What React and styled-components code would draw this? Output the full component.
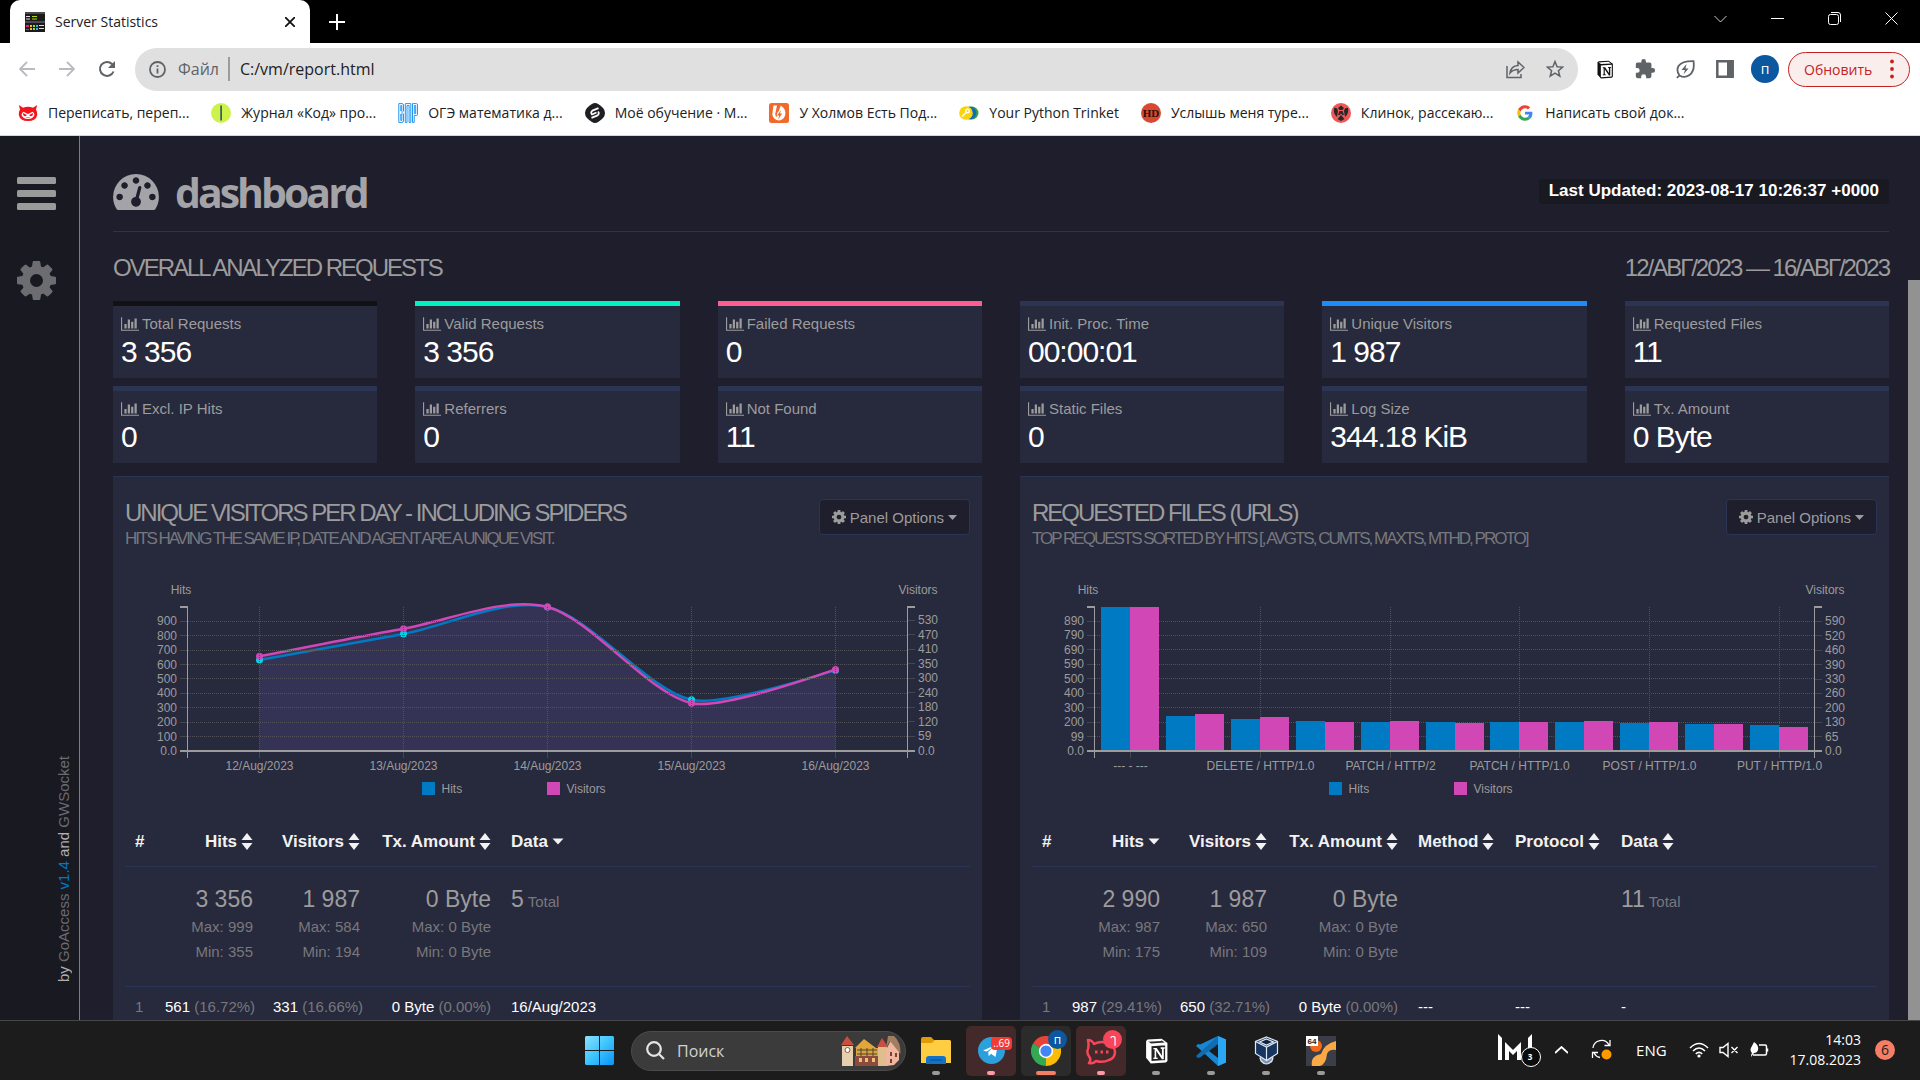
import React, { useLayoutEffect, useRef, useState } from "react";
import styled, { createGlobalStyle } from "styled-components";

const UI = `"Open Sans", "Noto Sans", sans-serif`;
const ARIAL = `"Liberation Sans", Arial, sans-serif`;
const C = {
  bg: "#1f1e2d",
  side: "#191922",
  panel: "#27293c",
  line: "#2b3553",
  text: "#9c9c9c",
  dim: "#77787c",
  hits: "#007bc3",
  visitors: "#d147b5",
};

const Global = createGlobalStyle`
  * { box-sizing: border-box; }
  body { margin: 0; background: ${C.bg}; font-family: ${ARIAL}; }
  button, input { font: inherit; color: inherit; }
  button { background: none; border: 0; padding: 0; margin: 0; }
  a { color: inherit; text-decoration: none; }
  h1, h2, h3, p { margin: 0; font-weight: 400; }
  svg { display: block; flex: none; }
`;

const Screen = styled.div`
  display: flex;
  flex-direction: column;
  height: 100vh;
  overflow: hidden;
`;

/* ---------- browser ---------- */

const TabStrip = styled.div`
  display: flex;
  align-items: center;
  height: 43px;
  flex: none;
  padding: 0 0 6px 10px;
  background: #000;
  font-family: ${UI};
`;
const Tab = styled.div`
  display: flex;
  align-items: center;
  gap: 10px;
  width: 300px;
  height: 43px;
  align-self: flex-start;
  flex: none;
  padding: 0 12px 0 15px;
  border-radius: 10px 10px 0 0;
  background: #fff;
  color: #202124;
  font-size: 14px;
`;
const TabTitle = styled.span`
  flex: 1;
`;
const IconButton = styled.button`
  display: flex;
  align-items: center;
  justify-content: center;
  width: ${(p) => p.$w || 40}px;
  height: ${(p) => p.$h || 36}px;
  flex: none;
  color: ${(p) => p.$color || "#5f6368"};
`;
const Spacer = styled.div`
  flex: 1;
`;
const Toolbar = styled.div`
  display: flex;
  align-items: center;
  height: 52px;
  flex: none;
  padding: 0 10px 0 7px;
  background: #fff;
  font-family: ${UI};
`;
const Omnibox = styled.div`
  display: flex;
  align-items: center;
  flex: 1;
  height: 43px;
  margin: 0 7px 0 8px;
  padding: 0 3px 0 14px;
  border-radius: 22px;
  background: #e0e0e0;
  color: #5f6368;
  font-size: 16px;
`;
const Scheme = styled.label`
  margin-left: 12px;
  padding-right: 9px;
  border-right: 2px solid #9a9da0;
  line-height: 24px;
`;
const Address = styled.input`
  flex: 1;
  min-width: 0;
  margin-left: 10px;
  padding: 0;
  border: 0;
  background: none;
  color: #202124;
  outline: none;
`;
const Avatar = styled.button`
  width: 28px;
  height: 28px;
  margin: 0 9px 0 6px;
  border-radius: 50%;
  background: #0b57a0;
  color: #fff;
  font-size: 14px;
  line-height: 26px;
`;
const Update = styled.button`
  display: flex;
  align-items: center;
  justify-content: space-between;
  width: 122px;
  height: 35px;
  padding: 0 15px;
  border: 1px solid #c5221f;
  border-radius: 18px;
  background: #faeeed;
  color: #c5221f;
  font-size: 14px;
`;
const Bookmarks = styled.nav`
  display: flex;
  align-items: center;
  gap: 22px;
  height: 41px;
  flex: none;
  padding: 0 18px 5px;
  border-bottom: 1px solid #d5d7da;
  background: #fff;
  color: #202124;
  font-family: ${UI};
  font-size: 14px;
`;
const Bookmark = styled.a`
  display: flex;
  align-items: center;
  gap: 10px;
  white-space: nowrap;
`;

/* ---------- report page ---------- */

const Page = styled.div`
  display: flex;
  flex: 1;
  min-height: 0;
  overflow: hidden;
  background: ${C.bg};
  color: ${C.text};
`;
const Side = styled.aside`
  display: flex;
  flex-direction: column;
  align-items: flex-start;
  gap: 50px;
  width: 80px;
  flex: none;
  padding: 41px 0 38px 17px;
  border-right: 1px solid ${C.visitors};
  background: ${C.side};
`;
const Credit = styled.div`
  margin: auto 0 0 38px;
  writing-mode: vertical-rl;
  transform: rotate(180deg);
  font-size: 15px;
  line-height: 18px;
  color: #b0b0b0;
`;
const CreditLink = styled.a`
  color: ${(p) => (p.$accent ? C.hits : "#6b6b70")};
`;
const Main = styled.main`
  flex: 1;
  min-width: 0;
  padding: 0 19px 0 33px;
`;
const Scrollbar = styled.div`
  width: 12px;
  flex: none;
  padding-top: 144px;
`;
const Thumb = styled.div`
  height: 100%;
  background: #929292;
`;
const Header = styled.header`
  display: flex;
  align-items: center;
  justify-content: space-between;
  height: 96px;
  padding-top: 16px;
  border-bottom: 1px solid ${C.line};
`;
const Brand = styled.h1`
  display: flex;
  align-items: center;
  gap: 16px;
  color: #a3a3a8;
  font-family: ${UI};
  font-size: 41px;
  font-weight: 700;
  letter-spacing: -3px;
  line-height: 44px;
`;
const Updated = styled.div`
  height: 25px;
  padding: 0 10px;
  border-radius: 4px;
  background: ${C.side};
  color: #fff;
  font-size: 17px;
  font-weight: 700;
  line-height: 23px;
`;
const SectionHead = styled.div`
  display: flex;
  justify-content: space-between;
  padding: 24px 0 21px;
`;
const Heading = styled.h2`
  font-size: 24px;
  line-height: 24px;
  letter-spacing: -2px;
  text-transform: uppercase;
`;
const Cards = styled.div`
  display: grid;
  grid-template-columns: repeat(6, 1fr);
  gap: 8px 38px;
`;
const Card = styled.div`
  height: 77px;
  padding: 8px;
  border-top: 5px solid ${(p) => p.$top || C.line};
  background: ${C.panel};
`;
const CardLabel = styled.div`
  display: flex;
  align-items: center;
  gap: 3px;
  font-size: 15px;
  line-height: 20px;
`;
const CardValue = styled.div`
  color: #fff;
  font-size: 30px;
  line-height: 36px;
  letter-spacing: -1px;
`;
const Panels = styled.div`
  display: grid;
  grid-template-columns: 1fr 1fr;
  gap: 38px;
  margin-top: 13px;
`;
const Panel = styled.section`
  min-width: 0;
  padding: 22px 12px 0;
  border-top: 1px solid ${C.line};
  background: ${C.panel};
`;
const PanelHead = styled.div`
  display: flex;
  justify-content: space-between;
  align-items: flex-start;
  height: 61px;
`;
const PanelTitle = styled.div`
  padding-top: 2px;
`;
const Subtitle = styled.p`
  margin-top: 4px;
  color: ${C.dim};
  font-size: 17px;
  line-height: 20px;
  letter-spacing: -2px;
  text-transform: uppercase;
`;
const Options = styled.button`
  display: flex;
  align-items: center;
  gap: 4px;
  height: 36px;
  padding: 0 12px;
  border: 1px solid ${C.line};
  border-radius: 4px;
  background: ${C.bg};
  font-size: 15px;
`;
const ChartBox = styled.div`
  height: 250px;
  margin-bottom: 8px;
  svg { width: 100%; }
  text { fill: ${C.text}; font: 12px ${ARIAL}; }
`;
const Table = styled.table`
  width: 100%;
  table-layout: fixed;
  border-collapse: collapse;
  font-size: 15px;
  white-space: nowrap;
  tr { border-bottom: 1px solid ${C.line}; }
`;
const Th = styled.th`
  height: 48px;
  padding: 0 10px;
  color: #f2f2f2;
  font-size: 17px;
  text-align: ${(p) => (p.$num ? "right" : "left")};
  button { display: inline-flex; align-items: center; gap: 4px; }
`;
const Td = styled.td`
  height: 40px;
  padding: 0 10px;
  color: ${(p) => (p.$dim ? C.dim : "#fff")};
  text-align: ${(p) => (p.$num ? "right" : "left")};
  span { color: ${C.dim}; }
`;
const SumTd = styled.td`
  height: 120px;
  padding: 18px 10px 0;
  vertical-align: top;
  color: ${C.dim};
  line-height: 25px;
  text-align: ${(p) => (p.$num ? "right" : "left")};
  strong { color: ${C.text}; font-size: 23px; font-weight: 400; line-height: 28px; }
`;

/* ---------- taskbar ---------- */

const Taskbar = styled.footer`
  display: grid;
  grid-template-columns: 1fr auto 1fr;
  align-items: center;
  height: 60px;
  flex: none;
  border-top: 1px solid #474747;
  background: #1c1c1c;
  color: #fff;
  font-family: ${UI};
`;
const Apps = styled.div`
  grid-column: 2;
  display: flex;
  align-items: center;
  gap: 5px;
`;
const Tile = styled.button`
  position: relative;
  display: flex;
  align-items: center;
  justify-content: center;
  width: 50px;
  height: 50px;
  border-radius: 5px;
  background: ${(p) => p.$bg || "none"};
  &::after {
    content: "";
    position: absolute;
    bottom: 1px;
    left: calc(50% - ${(p) => (p.$wide ? 10 : 4)}px);
    width: ${(p) => (p.$wide ? 20 : 8)}px;
    height: ${(p) => (p.$mark ? 4 : 0)}px;
    border-radius: 2px;
    background: ${(p) => p.$mark};
  }
`;
const Bubble = styled.span`
  position: absolute;
  top: ${(p) => p.$top}px;
  right: ${(p) => p.$right}px;
  min-width: ${(p) => p.$h}px;
  padding: 0 2px;
  border-radius: ${(p) => p.$r}px;
  background: ${(p) => p.$bg};
  color: #fff;
  font-size: ${(p) => p.$size}px;
  line-height: ${(p) => p.$h}px;
  text-align: center;
`;
const Search = styled.label`
  display: flex;
  align-items: center;
  width: 275px;
  height: 40px;
  margin: 0 0 0 2px;
  padding: 0 4px 0 14px;
  border: 1px solid #4b4b4b;
  border-radius: 20px;
  background: #3b3b3b;
  input {
    flex: 1;
    min-width: 0;
    margin-left: 12px;
    padding: 0;
    border: 0;
    outline: none;
    background: none;
    font-size: 16px;
  }
  input::placeholder { color: #d2d2d2; opacity: 1; }
`;
const Tray = styled.div`
  display: flex;
  align-items: center;
  justify-content: flex-end;
  padding: 0 25px 2px 0;
`;
const Lang = styled.span`
  margin: 0 22px 0 23px;
  font-size: 15px;
`;
const Clock = styled.time`
  margin: 0 14px 0 21px;
  font-size: 14px;
  line-height: 20px;
  text-align: right;
`;
const Notices = styled.span`
  width: 20px;
  border-radius: 50%;
  background: #f47f66;
  color: #1c1c1c;
  font-size: 14px;
  line-height: 20px;
  text-align: center;
`;

/* ---------- icons ---------- */

const Svg = ({ w = 20, h = w, box = "0 0 20 20", children, ...rest }) => (
  <svg width={w} height={h} viewBox={box} fill="none" stroke="currentColor" aria-hidden="true" {...rest}>
    {children}
  </svg>
);
const Solid = (p) => <Svg stroke="none" fill="currentColor" {...p} />;

const COG =
  "M1152 896q0-106-75-181t-181-75-181 75-75 181 75 181 181 75 181-75 75-181zm512-109v222q0 12-8 23t-20 13l-185 28q-19 54-39 91 35 50 107 138 10 12 10 25t-9 23q-27 37-99 108t-94 71q-12 0-26-9l-138-108q-44 23-91 38-16 136-29 186-7 28-36 28h-222q-14 0-24.5-8.5t-11.5-21.5l-28-184q-49-16-90-37l-141 107q-10 9-25 9-14 0-25-11-126-114-165-168-7-10-7-23 0-12 8-23 15-21 51-66.5t54-70.5q-27-50-41-99l-183-27q-13-2-21-12.5t-8-23.5v-222q0-12 8-23t19-13l186-28q14-46 39-92-40-57-107-138-10-12-10-24 0-10 9-23 26-36 98.5-107.5t94.5-71.5q13 0 26 10l138 107q44-23 91-38 16-136 29-186 7-28 36-28h222q14 0 24.5 8.5t11.5 21.5l28 184q49 16 90 37l142-107q9-9 24-9 13 0 25 10 129 119 165 170 7 8 7 22 0 12-8 23-15 21-51 66.5t-54 70.5q26 50 41 98l183 28q13 2 21 12.5t8 23.5z";
const DOT = "q0-53-37.5-90.5t-90.5-37.5-90.5 37.5-37.5 90.5 37.5 90.5 90.5 37.5 90.5-37.5 37.5-90.5z";
const GAUGE = `M384 1152${DOT}m192-448${DOT}m428 481l101-382q6-26-7.5-48.5t-38.5-29.5-48 6.5-30 39.5l-101 382q-60 5-107 43.5t-63 98.5q-20 77 20 146t117 89 146-20 89-117q16-60-6-117t-72-91zm660-33${DOT}m-640-640${DOT}m448 192${DOT}m320 448q0 261-141 483-19 29-54 29h-1402q-35 0-54-29-141-221-141-483 0-182 71-348t191-286 286-191 348-71 348 71 286 191 191 286 71 348z`;

const Cog = ({ size }) => (
  <Solid w={size} box="128 128 1536 1536"><path d={COG} /></Solid>
);
const BarsMenu = () => (
  <Solid w={39} h={34} box="0 0 39 34">
    <rect width="39" height="7" rx="1.5" /><rect y="13" width="39" height="7" rx="1.5" /><rect y="26" width="39" height="7" rx="1.5" />
  </Solid>
);
const MiniChart = () => (
  <Solid w={18} h={14} box="0 128 2048 1536">
    <path d="M640 896v512h-256v-512h256zm384-512v1024h-256v-1024h256zm1024 1152v128h-2048v-1536h128v1408h1920zm-640-896v768h-256v-768h256zm384-384v1152h-256v-1152h256z" />
  </Solid>
);
const Sort = ({ only }) => (
  <Solid w={12} h={18} box="0 0 12 18">
    {!only && <path d="M6 0 11.5 7H.5z" />}
    {only ? <path d="M.5 5.500h11L6 11.500z" /> : <path d="M.5 10h11L6 17z" />}
  </Solid>
);
const Notion = ({ w, light }) => (
  <Svg w={w} h={w + 1} box="0 0 24 25" stroke="none">
    <path d="M3.500 1.500 17 .8l5.500 4V22l-1.500 1.600-14.500.9L2 19V3z" fill={light ? "#fff" : "#111"} />
    <path d="m3.500 3 13.200-.9L20 4.400 6.800 5.300z" fill={light ? "#2a2a2a" : "#fff"} />
    <path d="M6.500 7.200 21 6.300v15.600l-14.500.9z" fill={light ? "#222" : "#fff"} />
    <path d="M9 9.500h3.200l5 7.600V10.600l-1.200-.3V9h4v1.200l-1 .4v9.800h-1.800l-5.500-8.100v6.400l1.400.4v1.200H9v-1.200l1.200-.4v-7.900L9 10.800z" fill={light ? "#fff" : "#111"} />
    {light && <path d="M6.500 7.200 21 6.300v15.600l-14.500.9zM3.500 3l13.200-.9" stroke="#fff" strokeWidth="1.400" fill="none" />}
  </Svg>
);

const Favicon = () => (
  <Svg w={20} stroke="none">
    <path d="M0 0h20v20H0z" fill="#1b1b1b" /><path d="M0 0h20v2H0zM0 9h20v2H0z" fill="#4b4b4b" />
    <path d="M1 4h4v1H1zM1 6.500h4v1H1z" fill="#ddd" /><path d="M7 4h5v1H7zM7 6.500h5v1H7z" fill="#b5dc1e" />
    <path d="M1 13h3v2H1zM1 17h3v1H1z" fill="#e6257d" /><path d="M5 13h2v2H5zM5 16h2v2H5z" fill="#f0c52e" />
    <path d="M8 13h2v2H8zM8 16h2v2H8z" fill="#a8d52d" /><path d="M11 13h2v2h-2zM11 16h2v2h-2z" fill="#39b0e8" /><path d="M14 13h5v1h-5zM14 16h5v1h-5z" fill="#ddd" />
  </Svg>
);

const bookmarkIcons = {
  devil: (
    <Svg stroke="none">
      <path d="M.8 2 2 6.500Q.5 9 .8 12 2 18 10 18t9.200-6q.3-3-1.200-5.500L19.200 2 15 4.800q-5-2-10 0z" fill="#f5131c" />
      <path d="M3.500 12q.2-2.500 2-3.300L10 11l4.500-2.300q1.800.8 2 3.300Q15 16 10 16t-6.500-4z" fill="#fff" />
      <path d="m5 10 3.800 1.900q-.8 1.800-2.500 1.200Q4.800 12.500 5 10zM15 10l-3.800 1.900q.8 1.800 2.500 1.200Q15.200 12.500 15 10zM7.500 14.500q2.500 1 5 0" fill="#f5131c" />
    </Svg>
  ),
  code: (
    <Svg stroke="none"><circle cx="10" cy="10" r="10" fill="#cff24a" /><path d="M9.300 2.500h1.600v15H9.300z" fill="#27506d" /></Svg>
  ),
  vpr: (
    <Svg stroke="#2196f3" strokeWidth="1"><path d="M.8.6H4q1.500 0 1.500 1.500V8L4 9.500 5.500 11v6.900Q5.500 19.400 4 19.400H.8zM2.800 2.500v5.500h1V2.500zM2.800 11v6.500h1V11zM7.300 19.400V.6h5.500v18.800h-1.700V2.500H9v16.900zM14.500 19.400V.6h4q1 0 1 1.500v9q0 1.500-1 1.500h-2.300v6.800zM16.300 2.500v8.200h1.400V2.500z" /></Svg>
  ),
  hex: (
    <Svg stroke="none"><path d="M10 0q3 0 8 5 2 2 2 5t-2 5q-5 5-8 5t-8-5q-2-2-2-5t2-5q5-5 8-5z" fill="#1d1f22" /><path d="M13.500 5.200 8 7.300Q5 9 7 11.500l4.500-2M6.500 14.800l5.500-2.100q3-1.700 1-4.200" stroke="#fff" strokeWidth="1.800" /></Svg>
  ),
  flame: (
    <Svg stroke="none"><rect width="20" height="20" rx="2.500" fill="#f26a2b" /><path d="M4.500 2.500H8L6.300 10.500q-.3 3 2 3.500-1.500-3 1.500-6l2-5.500q5.500 4 4.500 9-1 5-6 6-6-.5-7-6z" fill="#fff" /><path d="m12 7-4 5.500h2.200l-1 4 4-6h-2.200z" fill="#f26a2b" /></Svg>
  ),
  trinket: (
    <Svg stroke="none"><circle cx="13" cy="10" r="6.500" fill="#43a047" /><circle cx="11" cy="10" r="6.500" fill="#0b6fb5" /><circle cx="7" cy="10" r="6.800" fill="#fdd20a" /><circle cx="8.500" cy="8" r="1.800" stroke="#fff" strokeWidth="1.400" /><path d="m7 9.500-4 4" stroke="#fff" strokeWidth="1.600" /></Svg>
  ),
  hd: (
    <Svg stroke="none"><circle cx="10" cy="10" r="10" fill="#d8492f" /><text x="10" y="14" textAnchor="middle" fontFamily="Liberation Serif, serif" fontWeight="700" fontSize="11" fill="#2c0f0b">HD</text></Svg>
  ),
  anime: (
    <Svg stroke="none"><circle cx="10" cy="10" r="10" fill="#ef5658" /><path d="M3 5q3-1 4 3l-1 6Q2 11 3 5zM17 5q-3-1-4 3l1 6q4-3 3-9zM10 2.500 13 5l-1.500 2h-3L7 5zM8.500 8h3L13 12h-2l-1-2-1 2H7zM6.500 16 10 12l3.500 4-3.500 2z" fill="#2a2626" /></Svg>
  ),
  google: (
    <Svg stroke="none" box="-7 -7 62 62"><path fill="#EA4335" d="M24 9.500c3.540 0 6.710 1.220 9.210 3.600l6.850-6.850C35.900 2.380 30.470 0 24 0 14.620 0 6.510 5.380 2.560 13.220l7.980 6.190C12.430 13.720 17.740 9.500 24 9.500z" /><path fill="#4285F4" d="M46.980 24.550c0-1.570-.15-3.090-.38-4.550H24v9.020h12.940c-.58 2.960-2.260 5.480-4.780 7.180l7.730 6c4.510-4.180 7.090-10.360 7.090-17.650z" /><path fill="#FBBC05" d="M10.530 28.590A14.500 14.500 0 0 1 9.770 24c0-1.600.27-3.140.76-4.590l-7.980-6.190A23.900 23.900 0 0 0 0 24c0 3.870.92 7.530 2.560 10.780l7.970-6.190z" /><path fill="#34A853" d="M24 48c6.480 0 11.930-2.130 15.890-5.810l-7.730-6c-2.150 1.450-4.920 2.300-8.160 2.300-6.260 0-11.570-4.220-13.470-9.910l-7.980 6.190C6.510 42.620 14.620 48 24 48z" /></Svg>
  ),
};
const bookmarks = [
  ["devil", "Переписать, переп..."],
  ["code", "Журнал «Код» про..."],
  ["vpr", "ОГЭ математика д..."],
  ["hex", "Моё обучение · М..."],
  ["flame", "У Холмов Есть Под..."],
  ["trinket", "Your Python Trinket"],
  ["hd", "Услышь меня туре..."],
  ["anime", "Клинок, рассекаю..."],
  ["google", "Написать свой док..."],
];

/* ---------- charts ---------- */

const TOP = 47;
const BASE = 191;
const SIDE = 63;

function useWidth() {
  const ref = useRef(null);
  const [width, setWidth] = useState(845);
  useLayoutEffect(() => {
    const measure = () => setWidth(Math.round(ref.current.clientWidth));
    measure();
    const ro = new ResizeObserver(measure);
    ro.observe(ref.current);
    return () => ro.disconnect();
  }, []);
  return [ref, width];
}

/* cardinal spline through the points, tension 0.7 */
function spline(pts) {
  const n = pts.length;
  const tan = pts.map((_, i) =>
    i > 0 && i < n - 1 ? [0.15 * (pts[i + 1][0] - pts[i - 1][0]), 0.15 * (pts[i + 1][1] - pts[i - 1][1])] : null
  );
  let d = `M${pts[0]}Q${pts[1][0] - (tan[1][0] * 2) / 3},${pts[1][1] - (tan[1][1] * 2) / 3} ${pts[1]}`;
  for (let i = 2; i < n - 1; i++) {
    const [a, b, s, t] = [pts[i - 1], pts[i], tan[i - 1], tan[i]];
    d += `C${a[0] + s[0]},${a[1] + s[1]} ${b[0] - t[0]},${b[1] - t[1]} ${b}`;
  }
  const [p, t] = [pts[n - 2], tan[n - 2]];
  return d + `Q${p[0] + (t[0] * 2) / 3},${p[1] + (t[1] * 2) / 3} ${pts[n - 1]}`;
}

/* centre of the pixel row nearest to a value, so hairlines stay sharp */
const crisp = (v) => Math.floor(v) + 0.5;

function Axes({ width, left, right, ticks }) {
  const x0 = SIDE;
  const x1 = width - SIDE;
  return (
    <g>
      <text x={x0 - 7} y={TOP - 13} textAnchor="middle">Hits</text>
      <text x={x1 + 11} y={TOP - 13} textAnchor="middle">Visitors</text>
      {left.labels.map((l, i) => {
        const y = BASE - left.step * (left.labels.length - 1 - i);
        return (
          <g key={l}>
            {y < BASE && <path d={`M${x0 - 8} ${crisp(y)}h8`} stroke="#45474f" />}
            <text x={x0 - 11} y={y + 4} textAnchor="end">{l}</text>
          </g>
        );
      })}
      {right.labels.map((l, i) => {
        const y = BASE - right.step * (right.labels.length - 1 - i);
        return (
          <g key={l}>
            {y < BASE && <path d={`M${x1} ${crisp(y)}h8`} stroke="#45474f" />}
            <text x={x1 + 11} y={y + 4}>{l}</text>
          </g>
        );
      })}
      {ticks.map((t) => (
        <g key={t.x}>
          <path d={`M${t.x} ${BASE}v7`} stroke="#45474f" />
          <text x={t.x} y={BASE + 19} textAnchor="middle">{t.label}</text>
        </g>
      ))}
      <path d={`M${x0 - 8} ${BASE}H${x1 + 8}M${x0 - 8} ${TOP}h8M${x1} ${TOP}h8`} stroke="#9c9c9c" strokeWidth="2" />
      <path d={`M${x0 - 0.5} ${TOP - 1}V${BASE + 7}M${x1 + 0.5} ${TOP - 1}V${BASE + 7}`} stroke="#9c9c9c" />
      <rect x={Math.round(width / 2) - 126} y={BASE + 31} width="13" height="13" fill={C.hits} />
      <text x={width / 2 - 106} y={BASE + 42}>Hits</text>
      <rect x={Math.round(width / 2) - 1} y={BASE + 31} width="13" height="13" fill={C.visitors} />
      <text x={width / 2 + 19} y={BASE + 42}>Visitors</text>
    </g>
  );
}

function Grid({ width, step, xs }) {
  return (
    <g stroke="#515257" strokeDasharray="1 1">
      {[1, 2, 3, 4, 5, 6, 7, 8, 9].map((n) => (
        <path key={n} d={`M${SIDE} ${crisp(BASE - step * n)}H${width - SIDE}`} />
      ))}
      {xs.map((x) => <path key={x} d={`M${x} ${TOP}V${BASE}`} />)}
    </g>
  );
}

function AreaChart({ days, left, right }) {
  const [ref, width] = useWidth();
  const band = (width - 2 * SIDE + 1) / days.length;
  const xs = days.map((_, i) => Math.round(SIDE + band * (i + 0.5)) - 0.5);
  const hits = days.map((d, i) => [xs[i], BASE - (144 * d.hits) / 999]);
  const vis = days.map((d, i) => [xs[i], BASE - (144 * d.visitors) / 584]);
  const close = `L${xs[xs.length - 1]},${BASE}L${xs[0]},${BASE}Z`;
  return (
    <ChartBox ref={ref}>
      <svg width={width} height="250" role="img" aria-label="Hits and visitors per day">
        <path d={spline(hits) + close} fill="#353355" />
        <path d={spline(vis) + close} fill="#353355" />
        <path d={spline(hits)} fill="none" stroke={C.hits} strokeWidth="2.5" />
        {hits.map((p) => <circle key={p} cx={p[0]} cy={p[1]} r="3.5" fill="#00d6e6" />)}
        <path d={spline(vis)} fill="none" stroke={C.visitors} strokeWidth="2.5" />
        {vis.map((p) => <circle key={p} cx={p[0]} cy={p[1]} r="3.5" fill={C.visitors} />)}
        <Grid width={width} step={left.step} xs={xs} />
        <Axes width={width} left={left} right={right} ticks={days.map((d, i) => ({ x: xs[i], label: d.day }))} />
      </svg>
    </ChartBox>
  );
}

function BarChart({ bars, left, right }) {
  const [ref, width] = useWidth();
  const step = (width - 2 * SIDE + 1) / (bars.length + 0.1);
  const half = Math.round((step * 0.9) / 2);
  const mids = bars.map((_, i) => Math.floor(SIDE + step * (i + 0.55)));
  const ticks = bars.map((b, i) => ({ x: mids[i] + 0.5, label: b.label })).filter((t) => t.label);
  return (
    <ChartBox ref={ref}>
      <svg width={width} height="250" role="img" aria-label="Hits and visitors per request">
        <Grid width={width} step={left.step} xs={ticks.map((t) => t.x)} />
        {bars.map((b, i) => (
          <g key={i}>
            <rect x={mids[i] - half} y={BASE - b.h} width={half} height={b.h} fill={C.hits} />
            <rect x={mids[i]} y={BASE - b.v} width={half} height={b.v} fill={C.visitors} />
          </g>
        ))}
        <Axes width={width} left={left} right={right} ticks={ticks} />
      </svg>
    </ChartBox>
  );
}

/* ---------- data ---------- */

const cards = [
  ["Total Requests", "3 356", "#121214"],
  ["Valid Requests", "3 356", "#00f2c3"],
  ["Failed Requests", "0", "#fd5d93"],
  ["Init. Proc. Time", "00:00:01"],
  ["Unique Visitors", "1 987", "#1d8cf8"],
  ["Requested Files", "11"],
  ["Excl. IP Hits", "0"],
  ["Referrers", "0"],
  ["Not Found", "11"],
  ["Static Files", "0"],
  ["Log Size", "344.18 KiB"],
  ["Tx. Amount", "0 Byte"],
];
const days = [
  { day: "12/Aug/2023", hits: 631, visitors: 384 },
  { day: "13/Aug/2023", hits: 812, visitors: 496 },
  { day: "14/Aug/2023", hits: 999, visitors: 584 },
  { day: "15/Aug/2023", hits: 355, visitors: 194 },
  { day: "16/Aug/2023", hits: 561, visitors: 331 },
];
const bars = [
  { h: 144, v: 144, label: "--- - ---" },
  { h: 35, v: 37 },
  { h: 32, v: 34, label: "DELETE / HTTP/1.0" },
  { h: 30, v: 29 },
  { h: 29, v: 30, label: "PATCH / HTTP/2" },
  { h: 29, v: 28 },
  { h: 29, v: 29, label: "PATCH / HTTP/1.0" },
  { h: 29, v: 30 },
  { h: 28, v: 29, label: "POST / HTTP/1.0" },
  { h: 27, v: 27 },
  { h: 26, v: 24, label: "PUT / HTTP/1.0" },
];
const scale = (s, step) => ({ labels: s.split(" "), step });

function PanelTop({ title, sub }) {
  return (
    <PanelHead>
      <PanelTitle>
        <Heading as="h3">{title}</Heading>
        <Subtitle>{sub}</Subtitle>
      </PanelTitle>
      <Options type="button"><Cog size={14} />Panel Options<Solid w={9} h={5} box="0 0 9 5"><path d="M0 0h9L4.500 5z" /></Solid></Options>
    </PanelHead>
  );
}

function Stats({ cols, sorted, sums, total, row }) {
  const widths = [30, 108, 107, 131, 97, 106];
  return (
    <Table>
      <colgroup>{cols.map((c, i) => <col key={c} width={i < cols.length - 1 ? widths[i] : undefined} />)}</colgroup>
      <thead>
        <tr>
          {cols.map((c, i) => (
            <Th key={c} scope="col" $num={i > 0 && i < 4}>
              {i === 0 ? c : <button type="button">{c}<Sort only={c === sorted} /></button>}
            </Th>
          ))}
        </tr>
      </thead>
      <tbody>
        <tr>
          <SumTd />
          {sums.map(([v, max, min]) => (
            <SumTd $num key={max}><strong>{v}</strong><br />Max: {max}<br />Min: {min}</SumTd>
          ))}
          {cols.slice(4, -1).map((c) => <SumTd key={c} />)}
          <SumTd><strong>{total}</strong> Total</SumTd>
        </tr>
        <tr>
          {row.map(([v, pct], i) => (
            <Td key={i} $dim={i === 0} $num={i > 0 && i < 4}>{v}{pct && <span> ({pct})</span>}</Td>
          ))}
        </tr>
      </tbody>
    </Table>
  );
}

/* ---------- sections ---------- */

function Browser() {
  return (
    <>
      <TabStrip>
        <Tab>
          <Favicon />
          <TabTitle>Server Statistics</TabTitle>
          <IconButton $w={16} $h={16} $color="#111" aria-label="Close tab"><Svg w={10} box="0 0 10 10" strokeWidth="1.800"><path d="m0 0 10 10M10 0 0 10" /></Svg></IconButton>
        </Tab>
        <IconButton $w={54} $h={31} $color="#fff" aria-label="New tab" style={{ alignSelf: "flex-end" }}><Svg w={16} box="0 0 16 16" strokeWidth="2"><path d="M8 0v16M0 8h16" /></Svg></IconButton>
        <Spacer />
        <IconButton $w={57} $color="#ccc" aria-label="Search tabs"><Svg w={13} h={8} box="0 0 13 8"><path d="m.5 1 6 6 6-6" /></Svg></IconButton>
        <IconButton $w={57} $color="#fff" aria-label="Minimize"><Svg w={13} h={1} box="0 0 13 1"><path d="M0 .5h13" /></Svg></IconButton>
        <IconButton $w={57} $color="#fff" aria-label="Restore"><Svg w={13} box="0 0 13 13"><rect x=".5" y="2.500" width="10" height="10" rx="2" /><path d="M3 .5h7q2.500 0 2.500 2.500v7" /></Svg></IconButton>
        <IconButton $w={57} $color="#fff" aria-label="Close"><Svg w={13} box="0 0 13 13"><path d="m.5.5 12 12M12.500.5l-12 12" /></Svg></IconButton>
      </TabStrip>
      <Toolbar>
        <IconButton $color="#b9bbbe" aria-label="Back"><Svg w={16} box="0 0 16 16" strokeWidth="1.800"><path d="M16 8H1.500M8 1 1 8l7 7" /></Svg></IconButton>
        <IconButton $color="#b9bbbe" aria-label="Forward"><Svg w={16} box="0 0 16 16" strokeWidth="1.800"><path d="M0 8h14.500M8 1l7 7-7 7" /></Svg></IconButton>
        <IconButton aria-label="Reload"><Svg w={18} box="0 0 18 18" strokeWidth="2"><path d="M15.500 11.500A7 7 0 1 1 14 4l2 2" /><path d="M17 1v7h-7z" fill="currentColor" stroke="none" /></Svg></IconButton>
        <Omnibox>
          <Svg w={17} box="0 0 17 17" strokeWidth="1.800"><circle cx="8.500" cy="8.500" r="7.500" /><path d="M8.500 7.500v5M8.500 4.200v1.800" /></Svg>
          <Scheme htmlFor="address">Файл</Scheme>
          <Address id="address" defaultValue="C:/vm/report.html" />
          <IconButton aria-label="Share"><Svg w={19} box="0 0 19 19" strokeWidth="1.500"><path d="M1 6v11.500h14V14" /><path d="M4 13q1-7 8-7.500V2l6 5.500-6 5.500V9.500q-5 0-8 3.500z" /></Svg></IconButton>
          <IconButton aria-label="Bookmark this page"><Svg w={18} box="0 0 18 18" strokeWidth="1.500"><path d="m9 1.500 2.100 5.200 5.600.4-4.300 3.600 1.400 5.500L9 13.200l-4.800 3 1.400-5.500L1.300 7.100l5.600-.4z" /></Svg></IconButton>
        </Omnibox>
        <IconButton aria-label="Notion"><Notion w={18} /></IconButton>
        <IconButton aria-label="Extensions"><Solid w={22} box="0 0 24 24"><path d="M20.500 11H19V7c0-1.100-.9-2-2-2h-4V3.500a2.500 2.500 0 0 0-5 0V5H4c-1.100 0-2 .9-2 2v3.800h1.500a2.700 2.700 0 0 1 0 5.400H2V20c0 1.100.9 2 2 2h3.800v-1.500a2.700 2.700 0 0 1 5.400 0V22H17c1.100 0 2-.9 2-2v-4h1.500a2.500 2.500 0 0 0 0-5z" /></Solid></IconButton>
        <IconButton aria-label="Energy saver"><Svg w={19} box="0 0 19 19" strokeWidth="1.800"><path d="M1 18q1-1.500 2.500-2.500Q0 11 2.500 6 6 1 17.500 1.200 19 11 13.500 15q-5 3.500-10 .5" /><path d="m10.500 4-5 6H9l-1.500 4.500 5-6H9.500z" fill="currentColor" stroke="none" /></Svg></IconButton>
        <IconButton aria-label="Side panel"><Svg w={18} box="0 0 18 18" strokeWidth="2.500"><path d="M1.300 1.300h15.400v15.400H1.300z" /><path d="M11 1h6v16h-6z" fill="currentColor" stroke="none" /></Svg></IconButton>
        <Avatar aria-label="Profile">п</Avatar>
        <Update type="button">Обновить<Solid w={4} h={20} box="0 0 4 20"><circle cx="2" cy="2.500" r="1.900" /><circle cx="2" cy="10" r="1.900" /><circle cx="2" cy="17.500" r="1.900" /></Solid></Update>
      </Toolbar>
      <Bookmarks>
        {bookmarks.map(([icon, name]) => <Bookmark href="#" key={name}>{bookmarkIcons[icon]}{name}</Bookmark>)}
      </Bookmarks>
    </>
  );
}

function Report() {
  return (
    <Page>
      <Side>
        <IconButton $w={39} $h={34} $color="#9a9a9a" aria-label="Panels"><BarsMenu /></IconButton>
        <IconButton $w={39} $h={39} $color="#6c6c71" aria-label="Settings"><Cog size={39} /></IconButton>
        <Credit>
          by <CreditLink href="#">GoAccess</CreditLink> <CreditLink href="#" $accent>v1.4</CreditLink> and <CreditLink href="#">GWSocket</CreditLink>
        </Credit>
      </Side>
      <Main>
        <Header>
          <Brand><Solid w={46} h={36} box="0 256 1792 1408"><path d={GAUGE} /></Solid>dashboard</Brand>
          <Updated>Last Updated: 2023-08-17 10:26:37 +0000</Updated>
        </Header>
        <SectionHead>
          <Heading>Overall Analyzed Requests</Heading>
          <Heading as="p">12/Авг/2023 — 16/Авг/2023</Heading>
        </SectionHead>
        <Cards>
          {cards.map(([label, value, top]) => (
            <Card key={label} $top={top}>
              <CardLabel><MiniChart />{label}</CardLabel>
              <CardValue>{value}</CardValue>
            </Card>
          ))}
        </Cards>
        <Panels>
          <Panel>
            <PanelTop title="Unique visitors per day - Including spiders" sub="Hits having the same IP, date and agent are a unique visit." />
            <AreaChart days={days} left={scale("900 800 700 600 500 400 300 200 100 0.0", 14.41)} right={scale("530 470 410 350 300 240 180 120 59 0.0", 14.55)} />
            <Stats
              cols={["#", "Hits", "Visitors", "Tx. Amount", "Data"]}
              sorted="Data"
              sums={[["3 356", "999", "355"], ["1 987", "584", "194"], ["0 Byte", "0 Byte", "0 Byte"]]}
              total="5"
              row={[["1"], ["561", "16.72%"], ["331", "16.66%"], ["0 Byte", "0.00%"], ["16/Aug/2023"]]}
            />
          </Panel>
          <Panel>
            <PanelTop title="Requested Files (URLs)" sub="Top requests sorted by hits [, avgts, cumts, maxts, mthd, proto]" />
            <BarChart bars={bars} left={scale("890 790 690 590 500 400 300 200 99 0.0", 14.44)} right={scale("590 520 460 390 330 260 200 130 65 0.0", 14.4)} />
            <Stats
              cols={["#", "Hits", "Visitors", "Tx. Amount", "Method", "Protocol", "Data"]}
              sorted="Hits"
              sums={[["2 990", "987", "175"], ["1 987", "650", "109"], ["0 Byte", "0 Byte", "0 Byte"]]}
              total="11"
              row={[["1"], ["987", "29.41%"], ["650", "32.71%"], ["0 Byte", "0.00%"], ["---"], ["---"], ["-"]]}
            />
          </Panel>
        </Panels>
      </Main>
      <Scrollbar><Thumb /></Scrollbar>
    </Page>
  );
}

const Town = () => (
  <Svg w={60} h={30} box="0 0 60 30" stroke="none">
    <path d="M1 10h11v20H1z" fill="#e6cfae" /><path d="M6 0 13 9H0z" fill="#c8503f" /><circle cx="6.500" cy="14" r="2.500" fill="#fff" stroke="#8c5a3a" />
    <path d="M37 11h9v19h-9z" fill="#e0bd8e" /><path d="m41 2 6 9H36z" fill="#c8503f" />
    <path d="M15 12h22v18H15z" fill="#d9a441" /><path d="m23 3 12 9H14z" fill="#e2a739" /><path d="M14 20h23v10H14z" fill="#8d4a3d" />
    <path d="M16 14h20M16 18h20M20 12v8M26 12v8M32 12v8" stroke="#55422f" /><path d="M18 22h3v4h-3zM24 22h3v4h-3zM31 22h3v4h-3z" fill="#e9c375" />
    <path d="M45 14 50 4l8 10v10l-5 5-8 1z" fill="#efb7a0" /><path d="M47 0h6q7 6 6.500 18L49 5l-4 7z" fill="#a07e5f" /><path d="M49 16h2v4h-2zM49 23h2v4h-2zM54 17h2v4h-2z" fill="#7a3f35" />
  </Svg>
);

function Desktop() {
  return (
    <Taskbar>
      <Apps>
        <Tile aria-label="Start">
          <Svg w={29} box="0 0 29 29" stroke="none">
            <defs><linearGradient id="win" x1="0" y1="0" x2="1" y2="1"><stop stopColor="#8ae2ff" /><stop offset=".5" stopColor="#3cc4fd" /><stop offset="1" stopColor="#0a93f5" /></linearGradient></defs>
            <path d="M1 0h13v14H0V1zM15 0h13l1 1v13H15zM0 15h14v14H1l-1-1zM15 15h14v13l-1 1H15z" fill="url(#win)" />
          </Svg>
        </Tile>
        <Search>
          <Svg w={19} box="0 0 19 19" strokeWidth="2.200" style={{ color: "#e4e4e4" }}><circle cx="8" cy="8" r="6.800" /><path d="m13 13 5 5" /></Svg>
          <input type="search" placeholder="Поиск" aria-label="Поиск" />
          <Town />
        </Search>
        <Tile $mark="#9a9a9a" aria-label="File Explorer">
          <Svg w={30} h={27} box="0 0 30 27" stroke="none">
            <path d="M0 2q0-2 2-2h8l3 3h15q2 0 2 2v20H0z" fill="#e19c05" /><path d="M0 6h11l3-3h14q2 0 2 2v21H0z" fill="#ffcd42" /><path d="M5 27v-5q0-3 3-3h14q3 0 3 3v5z" fill="#1272c8" /><path d="M9 23h12" stroke="#0b4e95" />
          </Svg>
        </Tile>
        <Tile $bg="#44292b" $mark="#ff9aa5" aria-label="Telegram">
          <Svg w={27} box="0 0 27 27" stroke="none"><circle cx="13.500" cy="13.500" r="13.500" fill="#2ba0dc" /><path d="m5 13.500 15-6.500-2.500 13-4.500-3.200-2.300 2.400-.5-4.200 6-5.500-7.500 5z" fill="#fff" /></Svg>
          <Bubble $top={11} $right={4} $r={4} $bg="#f23b35" $size={10} $h={13}>..69</Bubble>
        </Tile>
        <Tile $bg="#2b2b2b" $mark="#f47f66" $wide aria-label="Chrome">
          <Svg w={30} box="0 0 48 48" stroke="none">
            <path d="M24 24 3.200 12A24 24 0 0 1 44.800 12z" fill="#ea4335" /><path d="M24 24 44.800 12A24 24 0 0 1 24 48z" fill="#fbbc05" /><path d="M24 24v24A24 24 0 0 1 3.200 12z" fill="#34a853" /><circle cx="24" cy="24" r="11.500" fill="#fff" /><circle cx="24" cy="24" r="9" fill="#4285f4" />
          </Svg>
          <Bubble $top={4} $right={4} $r={10} $bg="#0b57a0" $size={12} $h={19}>п</Bubble>
        </Tile>
        <Tile $bg="#44292b" $mark="#ff9aa5" aria-label="Chat">
          <Svg w={31} h={28} box="0 0 31 28" strokeWidth="2.500" style={{ color: "#f7455a" }}>
            <path d="M2 3q4 0 6 4 8-4 15 0 6 3 6 8 0 6-6 8-6 3-13 1-3 3-7 2 2-2 1-5Q0 16 2 12 3 8 2 3z" strokeLinejoin="round" /><path d="M9 15h2.500M14.500 15H17M20 15h2.500" strokeWidth="3" />
          </Svg>
          <Bubble $top={4} $right={4} $r={10} $bg="#f7455a" $size={13} $h={19}>ๅ</Bubble>
        </Tile>
        <Tile $mark="#9a9a9a" aria-label="Notion"><Notion w={25} light /></Tile>
        <Tile $mark="#9a9a9a" aria-label="VS Code">
          <Svg w={30} box="0 0 30 30" stroke="none"><path d="m22 0 8 3.500v23L22 30 3 12.500 0 10l2-2 2 .5z" fill="#1a86d0" /><path d="M22 0v8L4 21.500l-2 .5-2-2z" fill="#0f6db3" /><path d="M22 8v14l-9-7z" fill="#1c1c1c" /><path d="m22 0 8 3.500v23L22 30z" fill="#2aa6f2" /></Svg>
        </Tile>
        <Tile $mark="#9a9a9a" aria-label="VirtualBox">
          <Svg w={25} h={29} box="0 0 25 29" stroke="#dfe7f1" strokeWidth="1.200"><path d="M6 22q6.500-3 13 0l-1 3q-5.500 6-11 0z" fill="#7f93b5" /><path d="m12.500 1 11 4.500v12l-11 7-11-7v-12z" fill="#17355f" /><path d="m1.500 5.500 11 5.500 11-5.500M12.500 11v13" /><path d="m12.500 3 7 3-7 3-7-3z" fill="#0d2344" /></Svg>
        </Tile>
        <Tile $mark="#9a9a9a" aria-label="Blender 64">
          <Svg w={30} box="0 0 30 30" stroke="none"><path d="M0 0h30v30H0z" fill="#3b3e49" /><path d="M30 5v9q-7-1-9 4-1 10-7 12H6q-2-10 9-12 3-10 15-13z" fill="#fba944" /><circle cx="10" cy="10" r="6" fill="#ef6a1b" /><path d="M0 0h12v10H0z" fill="#fff" /><text x="6" y="8" textAnchor="middle" fontSize="8" fontWeight="700" fontFamily="Liberation Sans, sans-serif" fill="#222">64</text></Svg>
        </Tile>
      </Apps>
      <Tray>
        <Svg w={44} h={36} box="0 0 44 36" stroke="none">
          <path d="m0 2 4 4v22H0zM34 2l-4 4v22h4zM7 10l8 8 8-8v18h-4v-9l-4 4-4-4v9H7z" fill="#fff" />
          <circle cx="33" cy="25" r="9.500" fill="#0c0c0c" stroke="#fff" /><text x="32" y="28" textAnchor="middle" fontSize="8" fontWeight="700" fontFamily="Open Sans, sans-serif" fill="#fff">3</text>
        </Svg>
        <IconButton $w={38} $color="#fff" aria-label="Hidden icons"><Svg w={13} h={8} box="0 0 13 8" strokeWidth="1.800"><path d="m0 7 6.500-6L13 7" /></Svg></IconButton>
        <Svg w={22} h={22} box="0 0 22 22" strokeWidth="1.300" style={{ marginLeft: 11 }}><path d="M2 9a8.500 8.500 0 0 1 16-3M19 1v5.500h-5.500M9 18.500A8.500 8.500 0 0 1 3 14M1.500 19v-5.500H7" /><circle cx="15.500" cy="15.500" r="5" fill="#f90" stroke="none" /></Svg>
        <Lang>ENG</Lang>
        <Svg w={20} h={16} box="0 0 20 16" strokeWidth="1.600"><path d="M1 6q9-9 18 0M4 9q6-6 12 0M6.800 11.800q3.200-3 6.400 0" /><circle cx="10" cy="14" r="1.600" fill="#fff" stroke="none" /></Svg>
        <Svg w={20} h={16} box="0 0 20 16" strokeWidth="1.400" style={{ marginLeft: 10 }}><path d="M1 5.500h3L9 1.500v13l-5-4H1zM12.500 5l6 6M18.500 5l-6 6" /></Svg>
        <Svg w={20} h={18} box="0 0 20 18" strokeWidth="1.500" style={{ marginLeft: 10 }}><path d="M10 4h6q1.500 0 1.500 1.500v7q0 1.500-1.500 1.500H4M18.500 7.500v3" /><path d="M5 1q5 3 4 8-1 3-4 3l-3 4q0-3 1-4-3-3 0-7z" fill="#fff" stroke="none" /></Svg>
        <Clock>14:03<br />17.08.2023</Clock>
        <Notices>6</Notices>
      </Tray>
    </Taskbar>
  );
}

export default function App() {
  return (
    <Screen>
      <Global />
      <Browser />
      <Report />
      <Desktop />
    </Screen>
  );
}
